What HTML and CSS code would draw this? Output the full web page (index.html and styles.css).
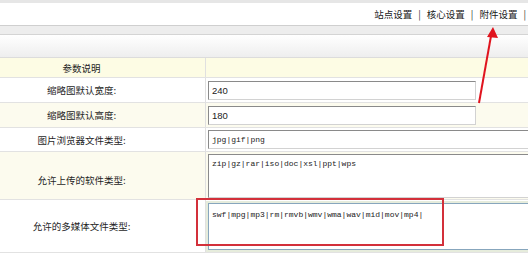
FILE: index.html
```html
<!DOCTYPE html>
<html>
    <head>
        <meta charset="UTF-8">
        <title>附件设置</title>
        <link rel="stylesheet" href="styles.css">
    </head>
    <body>
        <div class="top-bar">
            <div class="nav">
                <a href="#">站点设置</a><span class="sep">|</span>
                <a href="#">核心设置</a><span class="sep">|</span>
                <a href="#">附件设置</a><span class="sep">|</span>
            </div>
        </div>
        <div class="band"></div>
        <div class="toolbar"></div>

        <div class="settings">
            <div class="row head">
                <div class="label">参数说明</div>
                <div class="value"></div>
            </div>
            <div class="row">
                <div class="label">缩略图默认宽度:</div>
                <div class="value"><input class="short-input" type="text" value="240"></div>
            </div>
            <div class="row alt">
                <div class="label">缩略图默认高度:</div>
                <div class="value"><input class="short-input" type="text" value="180"></div>
            </div>
            <div class="row row-small">
                <div class="label">图片浏览器文件类型:</div>
                <div class="value"><input class="long-input" type="text" value="jpg|gif|png"></div>
            </div>
            <div class="row alt row-tall">
                <div class="label">允许上传的软件类型:</div>
                <div class="value"><textarea class="types">zip|gz|rar|iso|doc|xsl|ppt|wps</textarea></div>
            </div>
            <div class="row row-last">
                <div class="label">允许的多媒体文件类型:</div>
                <div class="value"><textarea class="types focused">swf|mpg|mp3|rm|rmvb|wmv|wma|wav|mid|mov|mp4|</textarea></div>
            </div>
        </div>

        <!-- annotation drawn over the screenshot -->
        <div class="mark-box"></div>
        <svg class="arrow" width="528" height="254" viewBox="0 0 528 254">
            <line x1="479" y1="103" x2="491" y2="36" stroke="#e0141e" stroke-width="2"/>
            <polygon points="493,27 487,37 498,38" fill="#e0141e"/>
        </svg>
    </body>
</html>
```

FILE: styles.css
```css
html {
    background-color: #fff;
}

body {
    margin: 0;
    width: 528px;
    height: 254px;
    overflow: hidden;
    position: relative;
    font-family: "Noto Sans CJK SC", "Liberation Sans", sans-serif;
    font-size: 9.5px;
    color: #1e1e1e;
}

.top-bar {
    height: 22px;
    border-top: 3px solid #e6e6e6;
    border-bottom: 1px solid #cfcfcf;
    display: flex;
    justify-content: flex-end;
    align-items: center;
}

.nav {
    display: flex;
    align-items: center;
    padding-right: 2px;
}

.nav a {
    color: #1a1a1a;
    text-decoration: none;
}

.sep {
    margin: 0 6px;
    color: #333;
}

.nav .sep:last-child {
    margin-right: 0;
}

.band {
    height: 8px;
    background-color: #ededed;
    border-bottom: 1px solid #d4d4d4;
}

.toolbar {
    height: 22px;
    background: linear-gradient(#ffffff, #eeeeee);
    border-bottom: 1px solid #dcdcdc;
}

.row {
    display: grid;
    grid-template-columns: 206px 1fr;
    height: 24px;
    border-bottom: 1px solid #e2e2e2;
    background-color: #fff;
}

.row.alt {
    background-color: #fcfbee;
}

.row.head {
    height: 19px;
    background-color: #fdfce4;
}

.row-small {
    height: 23px;
}

.row-tall {
    height: 47px;
}

.row-last {
    height: 52px;
}

.label {
    box-sizing: border-box;
    border-right: 1px solid #e0e0e0;
    padding-right: 42px;
    display: flex;
    align-items: center;
    justify-content: center;
}

.row-tall .label {
    padding-top: 8px;
}

.value {
    padding-left: 2px;
    overflow: hidden;
}

.short-input,
.long-input {
    box-sizing: border-box;
    height: 19px;
    margin: 3px 0 0 0;
    padding: 0 3px;
    border: 1px solid;
    border-color: #8a8a8a #d2d2d2 #d2d2d2 #8a8a8a;
    background-color: #fff;
    outline: none;
}

.short-input {
    width: 268px;
    font-family: "Liberation Sans", sans-serif;
    font-size: 9.5px;
    color: #222;
}

.long-input {
    width: 400px;
    margin-top: 2px;
    font-family: "Liberation Mono", monospace;
    font-size: 8px;
    color: #222;
}

.types {
    box-sizing: border-box;
    display: block;
    width: 400px;
    height: 44px;
    margin-top: 2px;
    padding: 4px 3px;
    border: 1px solid;
    border-color: #8a8a8a #d2d2d2 #d2d2d2 #8a8a8a;
    background-color: #fff;
    font-family: "Liberation Mono", monospace;
    font-size: 8px;
    color: #222;
    resize: none;
    outline: none;
}

.types.focused {
    height: 47px;
    margin-top: 3px;
    padding-top: 6px;
    border: 1px solid #87a6bd;
    box-shadow: 0 0 0 2px #e6ecdc;
}

.mark-box {
    position: absolute;
    left: 196px;
    top: 198px;
    width: 244px;
    height: 44px;
    border: 2px solid #d3303a;
}

.arrow {
    position: absolute;
    left: 0;
    top: 0;
    pointer-events: none;
}
```
